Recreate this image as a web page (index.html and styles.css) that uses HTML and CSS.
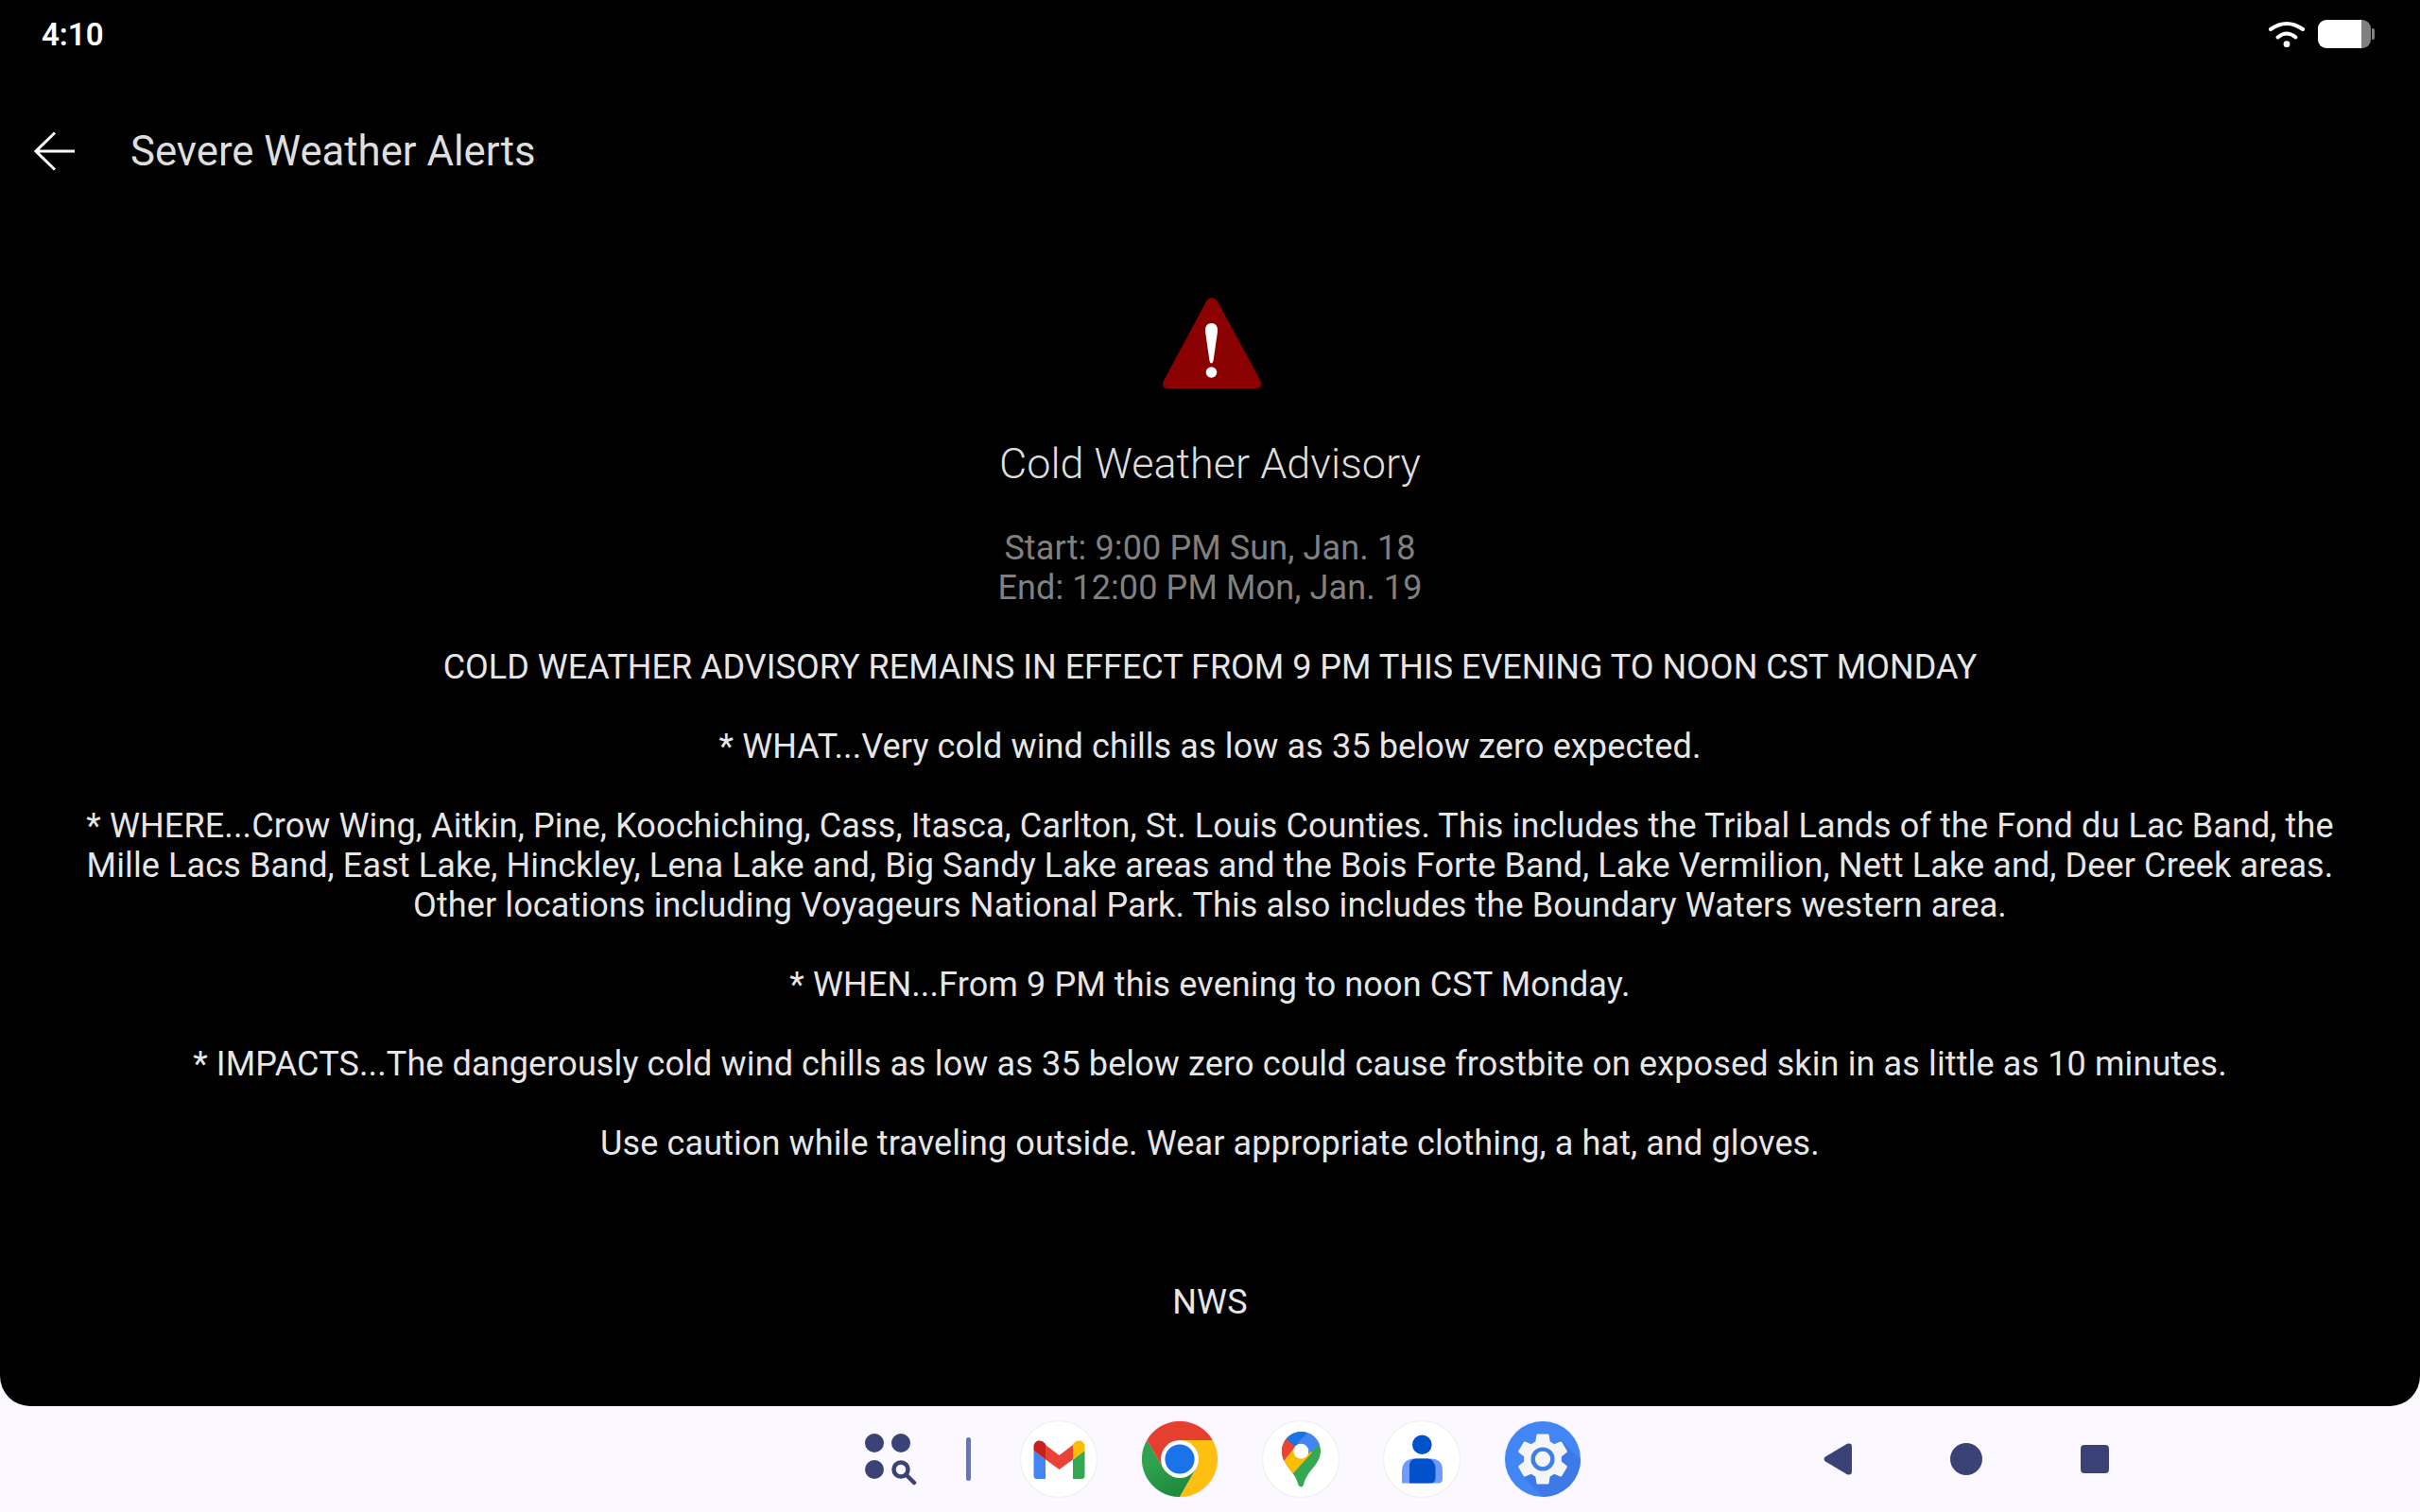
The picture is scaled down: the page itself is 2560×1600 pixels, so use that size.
FILE: index.html
```html
<!DOCTYPE html>
<html lang="en">
<head>
  <meta charset="UTF-8">
  <meta name="viewport" content="width=device-width, initial-scale=1.0">
  <title>Severe Weather Alerts</title>
  <link rel="stylesheet" href="styles.css">
</head>
<body>

  <div class="screen">
    <!-- Status bar -->
    <div class="status-bar">
      <span class="clock">4:10</span>
      <div class="status-icons">
        <svg class="wifi" viewBox="0 0 38 32" width="38" height="32">
          <path d="M2 11Q19 -1 36 11" fill="none" stroke="#fff" stroke-width="4" stroke-linecap="round"/>
          <path d="M9.5 19.5Q19 11.5 28.5 19.5" fill="none" stroke="#fff" stroke-width="4" stroke-linecap="round"/>
          <circle cx="19" cy="26.7" r="3.4" fill="#fff"/>
        </svg>
        <div class="battery"></div>
        <div class="battery-tip"></div>
      </div>
    </div>

    <!-- App bar -->
    <div class="app-bar">
      <svg class="back" viewBox="0 0 44 42" width="44" height="42">
        <path d="M43 21H3M22 1.500L2 21L22 40.500" fill="none" stroke="#fff" stroke-width="3"/>
      </svg>
      <h1>Severe Weather Alerts</h1>
    </div>

    <!-- Alert -->
    <div class="alert">
      <svg class="alert-icon" viewBox="0 0 106 98" width="106" height="98">
        <path d="M47.500 4Q53 -2 58.500 4L104.500 89Q107.500 97 100 97H7Q-1 97 2 89Z" fill="#8b0000"/>
        <path d="M52.500 28C56.500 28 59.500 31 59 37L54.500 68Q52.500 73 50.500 68L46 37C45.500 31 48.500 28 52.500 28Z" fill="#fff"/>
        <circle cx="52.500" cy="80" r="5.800" fill="#fff"/>
      </svg>
      <h2>Cold Weather Advisory</h2>
      <p class="dates">Start: 9:00 PM Sun, Jan. 18<br>End: 12:00 PM Mon, Jan. 19</p>
      <p class="caps">COLD WEATHER ADVISORY REMAINS IN EFFECT FROM 9 PM THIS EVENING TO NOON CST MONDAY</p>
      <p>* WHAT...Very cold wind chills as low as 35 below zero expected.</p>
      <p>* WHERE...Crow Wing, Aitkin, Pine, Koochiching, Cass, Itasca, Carlton, St. Louis Counties. This includes the Tribal Lands of the Fond du Lac Band, the Mille Lacs Band, East Lake, Hinckley, Lena Lake and, Big Sandy Lake areas and the Bois Forte Band, Lake Vermilion, Nett Lake and, Deer Creek areas. Other locations including Voyageurs National Park. This also includes the Boundary Waters western area.</p>
      <p>* WHEN...From 9 PM this evening to noon CST Monday.</p>
      <p>* IMPACTS...The dangerously cold wind chills as low as 35 below zero could cause frostbite on exposed skin in as little as 10 minutes.</p>
      <p>Use caution while traveling outside. Wear appropriate clothing, a hat, and gloves.</p>
      <p class="source">NWS</p>
    </div>
  </div>

  <!-- Taskbar -->
  <div class="taskbar">
    <svg class="launcher" viewBox="0 0 55 55" width="55" height="55">
      <circle cx="10" cy="10" r="10"/>
      <circle cx="38" cy="10" r="10"/>
      <circle cx="10" cy="38" r="10"/>
      <circle class="search" cx="38" cy="38" r="7.500"/>
      <path class="search" d="M44 44L52 52"/>
    </svg>
    <div class="divider"></div>

    <div class="apps">
      <!-- Gmail -->
      <svg class="app" viewBox="0 0 80 80" width="80" height="80">
        <circle cx="40" cy="40" r="40" fill="#fff"/>
        <path d="M13.500 31L26 40.500V61H17A3.500 3.500 0 0 1 13.500 57.500Z" fill="#4285f4"/>
        <path d="M67.500 31L55 40.500V61H64A3.500 3.500 0 0 0 67.500 57.500Z" fill="#34a853"/>
        <path d="M26 25L40.500 36L55 25V40.500L40.500 51L26 40.500Z" fill="#ea4335"/>
        <path d="M13.500 31V27C13.500 20 21 18 26 24V40.500Z" fill="#c5221f"/>
        <path d="M55 24C60 18 67.500 20 67.500 27V31L55 40.500Z" fill="#fbbc04"/>
      </svg>
      <!-- Chrome -->
      <svg class="app" viewBox="0 0 81 81" width="80" height="80">
        <defs>
          <linearGradient id="chromeGreen" x1="0" y1="0" x2="0.500" y2="1">
            <stop offset="0.400" stop-color="#2fa24f"/>
            <stop offset="1" stop-color="#1e8a3e"/>
          </linearGradient>
        </defs>
        <path d="M5.400 20.200A40.500 40.500 0 0 1 75.600 20.200H40.500L22.900 50.500Z" fill="#e53f30"/>
        <path d="M5.400 20.200A40.500 40.500 0 0 0 40.500 81L58 50.500H22.900Z" fill="url(#chromeGreen)"/>
        <path d="M75.600 20.200A40.500 40.500 0 0 1 40.500 81L58 50.500L40.500 20.200Z" fill="#fdc010"/>
        <circle cx="40.500" cy="40.500" r="20.200" fill="#fff"/>
        <circle cx="40.500" cy="40.500" r="15.800" fill="#1a73e8"/>
      </svg>
      <!-- Maps -->
      <svg class="app" viewBox="0 0 80 80" width="80" height="80">
        <defs>
          <clipPath id="pin">
            <path d="M40.500 11C29 11 20 20.500 20 31.500C20 47 34 52 37.500 67.500Q40.500 71.500 43 67.500C46 52 61 46 61 31.500C61 20.500 52 11 40.500 11Z"/>
          </clipPath>
        </defs>
        <circle cx="40" cy="40" r="40" fill="#fff"/>
        <g clip-path="url(#pin)">
          <rect x="10" y="5" width="60" height="70" fill="#34a853"/>
          <polygon points="10,52 40,20 52,33 33,54 25,64 10,64" fill="#fbbc04"/>
          <polygon points="24,18 34,27 22,42 10,52 10,18" fill="#ea4335"/>
          <polygon points="24,18 34,27 47,12 47,5 24,5" fill="#1a73e8"/>
          <polygon points="47,12 34,27 46,36 62,23 62,5 47,5" fill="#4285f4"/>
        </g>
        <circle cx="40.300" cy="31.700" r="8" fill="#fff"/>
      </svg>
      <!-- Contacts -->
      <svg class="app" viewBox="0 0 80 80" width="80" height="80">
        <circle cx="40" cy="40" r="40" fill="#fff"/>
        <circle cx="40.300" cy="24.700" r="10.300" fill="#0052cc"/>
        <path d="M32 39.500H50Q62 40 62 52V61Q62 65.500 57 65.500H19V52Q20 40 32 39.500Z" fill="#6f9bff"/>
        <path d="M34 39.500H46Q54 40 54.500 50V60Q54.500 65.500 49 65.500H27V47Q27 40 34 39.500Z" fill="#0052cc"/>
      </svg>
      <!-- Settings -->
      <svg class="app" viewBox="0 0 81 81" width="80" height="80">
        <defs>
          <clipPath id="settingsDisc"><circle cx="40.500" cy="40.500" r="40.500"/></clipPath>
        </defs>
        <circle cx="40.500" cy="40.500" r="40.500" fill="#4285f4"/>
        <polygon points="60,20 81,41 81,81 41,81 21,61" fill="#3e7ae6" clip-path="url(#settingsDisc)"/>
        <g transform="translate(6.900 6.900) scale(2.800)">
          <path d="M19.140 12.940c.04-.3.06-.61.06-.94 0-.32-.02-.64-.07-.94l2.030-1.580a.49.49 0 0 0 .12-.61l-1.920-3.320a.488.488 0 0 0-.59-.22l-2.390.96c-.5-.38-1.030-.7-1.620-.94l-.36-2.540a.484.484 0 0 0-.48-.41h-3.840c-.24 0-.43.17-.47.41l-.36 2.540c-.59.24-1.130.57-1.620.94l-2.390-.96c-.22-.08-.47 0-.59.22L2.740 8.870c-.12.21-.08.47.12.61l2.030 1.580c-.05.3-.09.63-.09.94s.02.64.07.94l-2.030 1.580a.49.49 0 0 0-.12.61l1.920 3.320c.12.22.37.29.59.22l2.390-.96c.5.38 1.030.7 1.620.94l.36 2.540c.05.24.24.41.48.41h3.840c.24 0 .44-.17.47-.41l.36-2.540c.59-.24 1.130-.56 1.620-.94l2.390.96c.22.08.47 0 .59-.22l1.920-3.320c.12-.22.07-.47-.12-.61l-2.010-1.580z" fill="#f5f5f5"/>
        </g>
        <circle cx="40.500" cy="40.500" r="10.500" fill="none" stroke="#4080e6" stroke-width="4.500"/>
      </svg>
    </div>

    <div class="nav">
      <svg viewBox="0 0 30 34" width="30" height="34">
        <path d="M25 .8Q30 -.5 30 4V30Q30 34.500 25 33.200L2 19.500Q-1 17 2 14.500Z"/>
      </svg>
      <svg viewBox="0 0 34 34" width="34" height="34"><circle cx="17" cy="17" r="17"/></svg>
      <svg viewBox="0 0 30 30" width="30" height="30"><rect width="30" height="30" rx="4"/></svg>
    </div>
  </div>

</body>
</html>
```

FILE: styles.css
```css
body {
  margin: 0;
  height: 1600px;
  overflow: hidden;
  background-color: #fbf8ff;
  font-family: Roboto, sans-serif;
}

.screen {
  height: 1488px;
  background-color: #000;
  border-radius: 0 0 32px 32px;
  color: #e6e6e6;
}

/* Status bar */
.status-bar {
  height: 72px;
  padding: 0 48px 0 44px;
  display: flex;
  align-items: center;
  justify-content: space-between;
}

.clock {
  color: #fff;
  font-size: 33px;
  font-weight: 600;
}

.status-icons {
  display: flex;
  align-items: center;
}

.wifi {
  margin-right: 14px;
}

.battery {
  width: 56px;
  height: 30px;
  border-radius: 9px;
  background: linear-gradient(90deg, #fff 46px, #808080 46px);
}

.battery-tip {
  width: 3px;
  height: 12px;
  margin-left: 1px;
  border-radius: 0 2px 2px 0;
  background-color: #808080;
}

/* App bar */
.app-bar {
  height: 176px;
  padding-left: 36px;
  display: flex;
  align-items: center;
}

.app-bar h1 {
  margin: 0 0 0 58px;
  font-size: 43.700px;
  font-weight: 400;
  color: #dedede;
}

/* Alert */
.alert {
  padding: 66px 80px 0;
  text-align: center;
  font-size: 36px;
  line-height: 42px;
  letter-spacing: 0.120px;
}

.alert-icon {
  display: block;
  margin: 0 auto;
  position: relative;
  left: 2px;
}

.alert h2 {
  margin: 51px 0 0;
  font-size: 45px;
  line-height: 56px;
  font-weight: 300;
  letter-spacing: 0;
  color: #ddd;
}

.alert p {
  margin: 42px 0 0;
}

.alert .dates {
  margin-top: 40px;
  color: #808080;
}

.alert .caps {
  letter-spacing: 0;
}

.alert .source {
  margin-top: 126px;
}

/* Taskbar */
.taskbar {
  height: 112px;
  padding-left: 915px;
  display: flex;
  align-items: center;
}

.launcher {
  margin-top: 1px;
  fill: #3b4376;
}

.launcher .search {
  fill: none;
  stroke: #3b4376;
  stroke-width: 4.500;
  stroke-linecap: round;
}

.divider {
  width: 5px;
  height: 46px;
  margin-left: 52px;
  border-radius: 3px;
  background-color: #6b74b0;
}

.apps {
  margin-left: 53px;
  display: flex;
  gap: 48px;
}

.app {
  filter: drop-shadow(0 0 1px rgba(0, 0, 0, 0.12));
}

.nav {
  margin-left: 257px;
  display: flex;
  align-items: center;
  gap: 104px;
  fill: #3b4376;
}
```
